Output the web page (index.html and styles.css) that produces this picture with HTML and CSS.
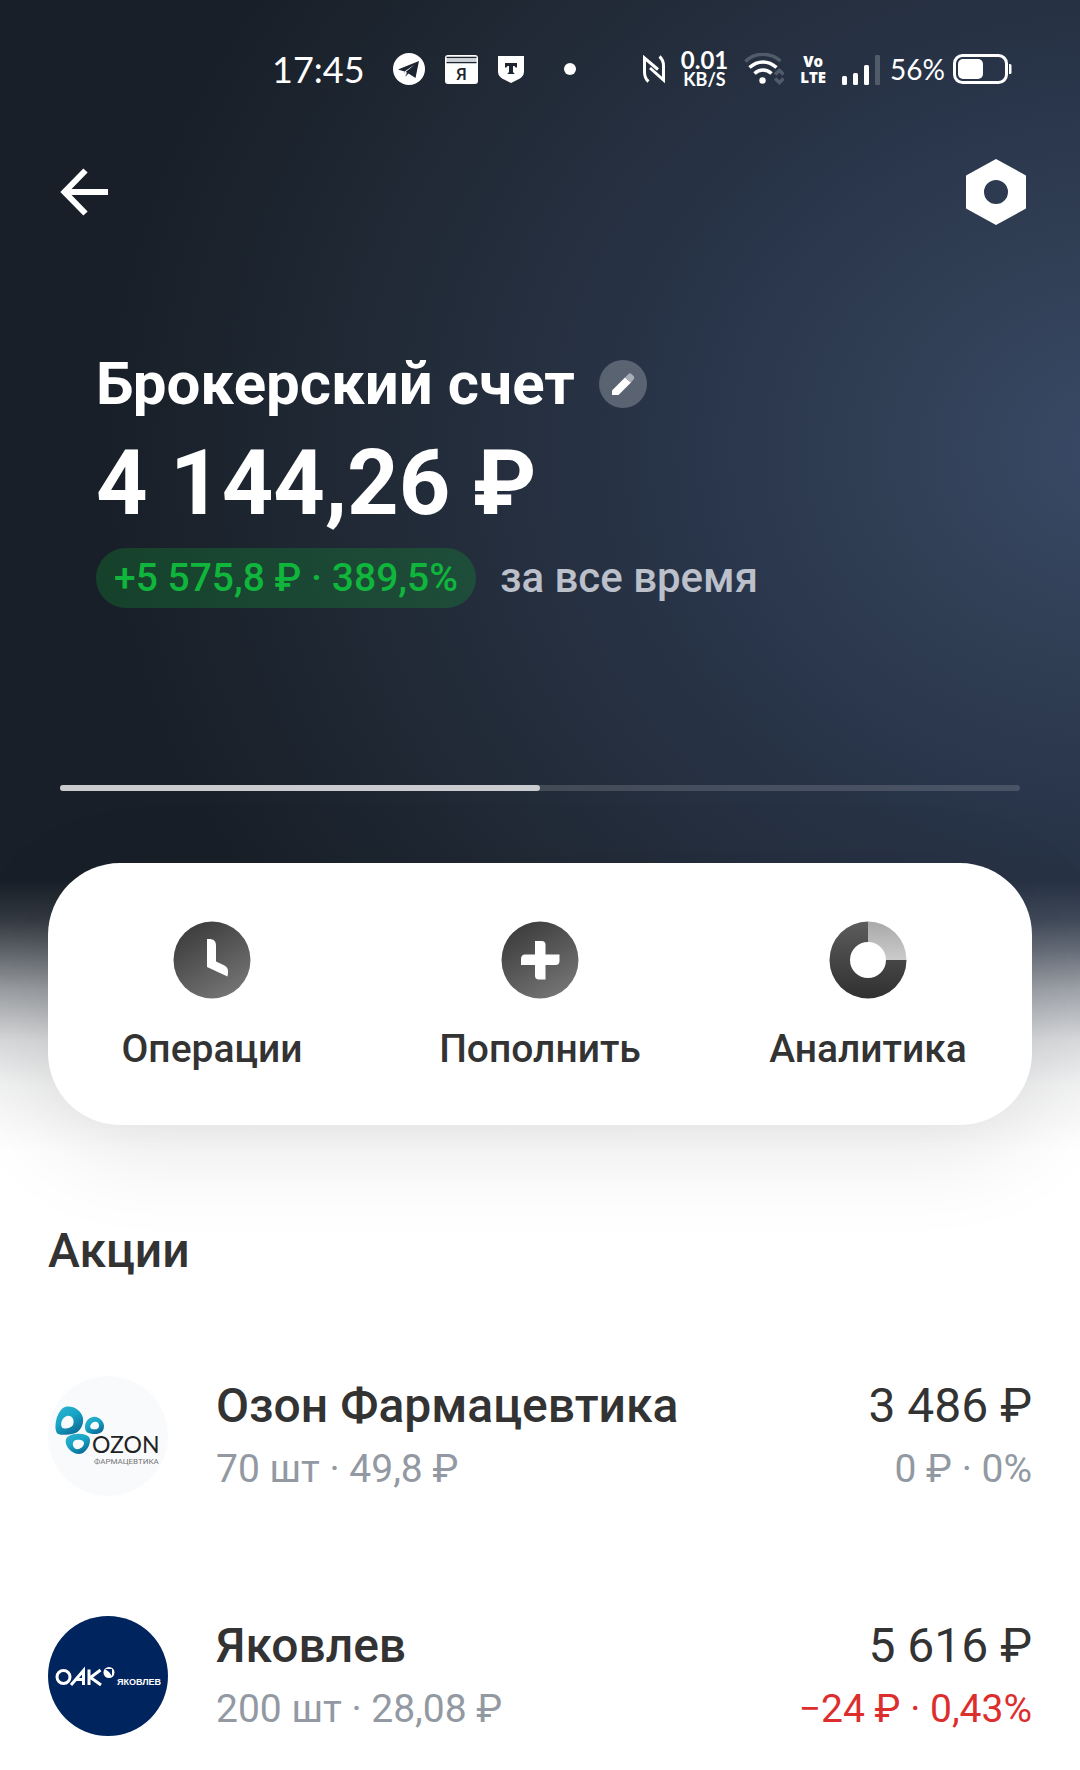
FILE: index.html
```html
<!DOCTYPE html>
<html lang="ru">
<head>
  <meta charset="UTF-8">
  <meta name="viewport" content="width=device-width, initial-scale=1.0">
  <title>Брокерский счет</title>
  <link rel="stylesheet" href="styles.css">
</head>
<body>
  <header class="hero">
    <div class="status-bar">
      <div class="status-left">
        <span class="time">17:45</span>
        <svg width="32" height="32" viewBox="0 0 32 32">
          <circle cx="16" cy="16" r="16" fill="#fff"/>
          <path d="M5 16.500 26 8 22.500 25 15.500 20.500 12.500 23.500 11.500 18.500Z" fill="#1d2530"/>
          <path d="M11.500 18.500 21 12 14 19.500 12.500 23.500Z" fill="#fff"/>
          <path d="M12.500 19 22 11.500 15 20Z" fill="#1d2530"/>
        </svg>
        <svg width="33" height="29" viewBox="0 0 33 29">
          <rect width="33" height="29" rx="3" fill="#fff"/>
          <path d="M1.500 2.500h30M1.500 7.500h30" stroke="#1d2530" stroke-width="1.600"/>
          <path d="M1.500 5h30" stroke="#cfd2d8" stroke-width="2.400"/>
          <text x="16.500" y="24.500" text-anchor="middle" class="ya-text">Я</text>
        </svg>
        <svg width="26" height="27" viewBox="0 0 26 27">
          <path d="M0 0h26v15c0 5-3 7-6 8.500L13 27 6 23.500C3 22 0 20 0 15Z" fill="#fff"/>
          <path d="M7 7h12v4.500h-1.500c-.3-1.200-1-1.500-2.500-1.500v5.500c0 1 .3 1.300 1.300 1.500v1H9.700v-1c1-.2 1.300-.5 1.300-1.500V10c-1.500 0-2.200.3-2.500 1.500H7Z" fill="#1d2530"/>
        </svg>
        <span class="dot"></span>
      </div>
      <div class="status-right">
        <svg width="22" height="28" viewBox="0 0 22 28" fill="none" stroke="#fff" stroke-width="3">
          <path d="M5.500 26.500C2 23.500 1.500 21 1.500 17V3L15 14.500"/>
          <path d="M16.500 1.500C20 4.500 20.500 7 20.500 11V25L7 13"/>
        </svg>
        <div class="speed">
          <span class="speed-value">0.01</span>
          <span class="speed-unit">KB/S</span>
        </div>
        <svg width="40" height="32" viewBox="0 0 40 32" fill="none" stroke-width="3.500">
          <path d="M1.500 8.500C11-1 26-1 36.500 8" stroke="#515b69"/>
          <path d="M5.500 14.500c8-7.500 19-7.500 27 0M10.500 20.500c5-4.700 12-4.700 17 0" stroke="#fff"/>
          <circle cx="18.500" cy="27.500" r="3.200" fill="#fff"/>
          <path d="m31 21.500 4.500-4 4 4M31 25.500l4.500 4 4-4" stroke="#515b69"/>
        </svg>
        <div class="volte">
          <span>Vo</span>
          <span>LTE</span>
        </div>
        <svg width="38" height="31" viewBox="0 0 38 31" fill="#fff">
          <rect y="22" width="5" height="9" rx="1.500"/>
          <rect x="11" y="19" width="5" height="12" rx="1.500"/>
          <rect x="22" y="11" width="5" height="20" rx="1.500"/>
          <rect x="33" y="1" width="5" height="30" rx="1" fill="#515b69"/>
        </svg>
        <div class="battery">
          <span class="percent">56%</span>
          <svg width="59" height="30" viewBox="0 0 59 30">
            <rect x="1.500" y="1.500" width="52" height="27" rx="8" fill="none" stroke="#fff" stroke-width="3"/>
            <rect x="5" y="5" width="25" height="20" rx="5" fill="#fff"/>
            <path d="M56 10h1a1.500 1.500 0 0 1 1.500 1.500v7a1.500 1.500 0 0 1-1.500 1.500h-1Z" fill="#fff"/>
          </svg>
        </div>
      </div>
    </div>

    <nav class="toolbar">
      <button class="icon-btn" aria-label="Назад">
        <svg width="48" height="48" viewBox="0 0 48 48" fill="none" stroke="#fff" stroke-width="6">
          <path d="M25.500 2.500 4.500 24l21 21.500M4 24h44"/>
        </svg>
      </button>
      <button class="icon-btn" aria-label="Настройки">
        <svg width="60" height="66" viewBox="0 0 60 66">
          <path fill="#fff" fill-rule="evenodd" d="M30 0l30 16.500v33L30 66 0 49.500v-33ZM30 21a12 12 0 1 0 0 24 12 12 0 0 0 0-24Z"/>
        </svg>
      </button>
    </nav>

    <section class="account">
      <div class="account-title">
        <h1>Брокерский счет</h1>
        <button class="edit-btn" aria-label="Изменить название">
          <svg width="24" height="24" viewBox="0 0 24 24">
            <path d="M1 23v-4.500L14 5.500l6 5L7.500 23Z" fill="#fff"/>
            <path d="M14 5.500 17.500 2c1-1 2-1 3 0L22.500 4c1 1 1 2.500 0 3.500L20 10.500Z" fill="#a9afb8"/>
          </svg>
        </button>
      </div>
      <p class="balance">4 144,26 ₽</p>
      <div class="profit">
        <span class="profit-badge">+5 575,8 ₽ · 389,5%</span>
        <span class="profit-period">за все время</span>
      </div>
    </section>

    <div class="pager">
      <div class="pager-active"></div>
    </div>
  </header>

  <main>
    <div class="actions">
      <button class="action">
        <svg width="78" height="78" viewBox="0 0 78 78">
          <defs>
            <linearGradient id="grey" x1="0.200" y1="0" x2="0.800" y2="1">
              <stop offset="0" stop-color="#3a3a3a"/>
              <stop offset="1" stop-color="#777"/>
            </linearGradient>
          </defs>
          <circle cx="39" cy="39" r="38.500" fill="url(#grey)"/>
          <path d="M34 18h2c4.500 0 7 2 7 6.500v16l7 3.200c4 1.900 5.500 4 5 8.300l-.5 3.500L34 46Z" fill="#fff"/>
        </svg>
        <span>Операции</span>
      </button>
      <button class="action">
        <svg width="78" height="78" viewBox="0 0 78 78">
          <circle cx="39" cy="39" r="38.500" fill="url(#grey)"/>
          <path d="M34 20h7c2 0 3.500 1.500 3.500 3.500v10h14V40c0 2.500-1.500 4-4 4h-10v14.500h-7c-2 0-3.500-1.500-3.500-3.500V44H20v-6c0-3 1.500-4.500 4-4.500h10Z" fill="#fff"/>
        </svg>
        <span>Пополнить</span>
      </button>
      <button class="action">
        <svg width="78" height="78" viewBox="0 0 78 78">
          <defs>
            <linearGradient id="ring" x1="0" y1="0" x2="0" y2="1">
              <stop offset="0" stop-color="#5c5c5c"/>
              <stop offset="1" stop-color="#303030"/>
            </linearGradient>
            <linearGradient id="slice" x1="0" y1="0" x2="0" y2="1">
              <stop offset="0" stop-color="#a9a9a9"/>
              <stop offset="1" stop-color="#cbcbcb"/>
            </linearGradient>
          </defs>
          <path d="M39 .5A38.500 38.500 0 1 0 77.500 39H57A18 18 0 1 1 39 21Z" fill="url(#ring)"/>
          <path d="M39 .5A38.500 38.500 0 0 1 77.500 39H57A18 18 0 0 0 39 21Z" fill="url(#slice)"/>
        </svg>
        <span>Аналитика</span>
      </button>
    </div>

    <section class="stocks">
      <h2>Акции</h2>
      <ul class="stock-list">
        <li class="stock">
          <svg width="120" height="120" viewBox="0 0 120 120">
            <defs>
              <linearGradient id="ozon" x1="0" y1="0" x2="0.600" y2="1">
                <stop offset="0" stop-color="#2fb4cf"/>
                <stop offset="0.500" stop-color="#17a5c6"/>
                <stop offset="1" stop-color="#0b6f9a"/>
              </linearGradient>
            </defs>
            <circle cx="60" cy="60" r="60" fill="#f9fafb"/>
            <g fill="url(#ozon)" fill-rule="evenodd">
              <path d="M15 32C22 28 33 33 35 42c1 7-3 14-9 15.500-5 1.200-12 2-16 .5-5-4-2-21 5-26ZM19 40c-5 1-7 8-5 11.500 2 2 9 1 11-2.500 2-5-1-10-6-9Z"/>
              <path d="M45 41c5-1 11 4 11 9 0 6-4 8-9 8-7 0-10-2-10-7s3-9 8-10ZM46 46c-4 1-5 6-2 7 3 .8 7 .5 7-3s-2-5-5-4Z"/>
              <path d="M21 60c5-3 16-3 20 1 3 4-1 13-6 16-4 2-8 1-12-2-5-4-8-12-2-15ZM28 64c-4 1-4 6-1 8.500 3 2 9-1 9-5.500 0-3-5-4-8-3Z"/>
            </g>
            <text x="44" y="77" class="ozon-name">OZON</text>
            <text x="46" y="88" class="ozon-sub">ФАРМАЦЕВТИКА</text>
          </svg>
          <div class="stock-main">
            <span class="stock-name">Озон Фармацевтика</span>
            <span class="stock-sub">70 шт · 49,8 ₽</span>
          </div>
          <div class="stock-values">
            <span class="stock-total">3 486 ₽</span>
            <span class="stock-sub">0 ₽ · 0%</span>
          </div>
        </li>
        <li class="stock">
          <svg width="120" height="120" viewBox="0 0 120 120">
            <circle cx="60" cy="60" r="60" fill="#00245e"/>
            <g fill="none" stroke="#fff" stroke-width="3">
              <circle cx="15.500" cy="61" r="6.500"/>
              <path d="M23 69 35.500 54.500V69M28 63.500h7"/>
              <path d="M41 53.500V69M52.500 54 42.500 61.500 53 69"/>
            </g>
            <circle cx="61" cy="56.500" r="5.500" fill="#fff"/>
            <path d="M57 53h7v7l-3-4Z" fill="#00245e"/>
            <text x="69" y="69" class="oak-sub">ЯКОВЛЕВ</text>
          </svg>
          <div class="stock-main">
            <span class="stock-name">Яковлев</span>
            <span class="stock-sub">200 шт · 28,08 ₽</span>
          </div>
          <div class="stock-values">
            <span class="stock-total">5 616 ₽</span>
            <span class="stock-sub loss">−24 ₽ · 0,43%</span>
          </div>
        </li>
      </ul>
    </section>
  </main>
</body>
</html>
```

FILE: styles.css
```css
* {
  box-sizing: border-box;
}

body {
  margin: 0;
  font-family: Roboto, 'Noto Sans', sans-serif;
  color: #333;
  background-color: #fff;
  background-image:
    linear-gradient(to bottom, rgba(255, 255, 255, 0) 880px, rgba(255, 255, 255, 0.12) 920px, rgba(255, 255, 255, 0.3) 950px, rgba(255, 255, 255, 0.57) 990px, rgba(255, 255, 255, 0.83) 1040px, rgba(255, 255, 255, 0.94) 1085px, #fff 1150px),
    radial-gradient(ellipse 1020px 860px at 1120px 450px, #3a4966 0%, #303e54 25%, #29354a 42%, #222b38 70%, #181f28 100%);
  background-size: 100% 1150px;
  background-repeat: no-repeat;
}

button {
  border: 0;
  padding: 0;
  background: none;
  font-family: inherit;
  color: inherit;
  cursor: pointer;
}

svg {
  display: block;
}

h1,
h2,
p,
ul {
  margin: 0;
  padding: 0;
}

.hero {
  color: #fff;
}

/* Status bar */
.status-bar {
  display: flex;
  justify-content: space-between;
  align-items: center;
  height: 138px;
  padding: 0 68px 0 272px;
}

.status-left,
.status-right {
  display: flex;
  align-items: center;
}

.status-left {
  gap: 20px;
}

.time {
  margin-right: 8px;
  font-family: Lato, sans-serif;
  font-size: 36px;
}

.ya-text {
  font-size: 17px;
  font-weight: 500;
  fill: #1d2530;
}

.dot {
  width: 12px;
  height: 12px;
  margin-left: 20px;
  border-radius: 50%;
  background-color: #fff;
}

.status-right {
  gap: 16px;
}

.speed {
  display: flex;
  flex-direction: column;
  align-items: center;
  font-family: Lato, sans-serif;
  font-weight: 700;
}

.speed-value {
  font-size: 24px;
  line-height: 20px;
}

.speed-unit {
  font-size: 18px;
  line-height: 18px;
}

.volte {
  display: flex;
  flex-direction: column;
  align-items: center;
  font-family: 'Open Sans', sans-serif;
  font-size: 15px;
  font-weight: 800;
  line-height: 16px;
}

.battery {
  display: flex;
  align-items: center;
  gap: 8px;
  margin-left: -6px;
}

.percent {
  font-family: Lato, sans-serif;
  font-size: 28px;
}

/* Top navigation */
.toolbar {
  display: flex;
  justify-content: space-between;
  align-items: center;
  padding: 21px 54px 0 60px;
}

/* Account summary */
.account {
  padding: 120px 96px 0;
}

.account-title {
  display: flex;
  align-items: center;
  gap: 24px;
}

h1 {
  font-size: 60px;
  font-weight: 700;
  line-height: 78px;
}

.edit-btn {
  display: flex;
  justify-content: center;
  align-items: center;
  width: 48px;
  height: 48px;
  border-radius: 50%;
  background-color: rgba(255, 255, 255, 0.24);
}

.balance {
  font-size: 90px;
  font-weight: 700;
  line-height: 122px;
}

.profit {
  display: flex;
  align-items: center;
  gap: 24px;
  margin-top: 3px;
  font-weight: 500;
  line-height: 60px;
}

.profit-badge {
  padding: 0 18px;
  border-radius: 30px;
  font-size: 39px;
  color: #10b53c;
  background-color: rgba(16, 181, 60, 0.24);
}

.profit-period {
  font-size: 42px;
  color: #bcc0cb;
}

.pager {
  height: 6px;
  margin: 177px 60px 0;
  border-radius: 3px;
  background-color: rgba(255, 255, 255, 0.15);
}

.pager-active {
  width: 50%;
  height: 100%;
  border-radius: 3px;
  background-color: #c9cbce;
}

/* Action card */
.actions {
  display: flex;
  margin: 72px 48px 0;
  padding: 58px 0 52px;
  border-radius: 72px;
  background-color: #fff;
  box-shadow: 0 24px 96px rgba(0, 0, 0, 0.1);
}

.action {
  flex: 1;
  display: flex;
  flex-direction: column;
  align-items: center;
  gap: 26px;
  font-size: 39px;
  font-weight: 500;
  line-height: 48px;
}

/* Stocks */
.stocks {
  padding: 96px 48px 36px;
}

h2 {
  font-size: 48px;
  font-weight: 500;
  line-height: 60px;
}

.stock-list {
  display: flex;
  flex-direction: column;
  gap: 114px;
  margin-top: 92px;
  list-style: none;
}

.stock {
  display: flex;
  align-items: center;
}

.stock-main,
.stock-values {
  display: flex;
  flex-direction: column;
}

.stock-main {
  flex: 1;
  margin-left: 48px;
}

.stock-values {
  align-items: flex-end;
}

.stock-name,
.stock-total {
  font-size: 48px;
  line-height: 66px;
}

.stock-name {
  font-weight: 500;
}

.stock-sub {
  font-size: 39px;
  line-height: 60px;
  color: #9299a2;
}

.loss {
  color: #dd2e2e;
}

.ozon-name {
  font-family: Lato, sans-serif;
  font-size: 23px;
  fill: #222;
}

.ozon-sub {
  font-size: 8px;
  fill: #777;
}

.oak-sub {
  font-family: 'Liberation Sans', sans-serif;
  font-size: 9px;
  font-weight: 700;
  fill: #fff;
}
```
